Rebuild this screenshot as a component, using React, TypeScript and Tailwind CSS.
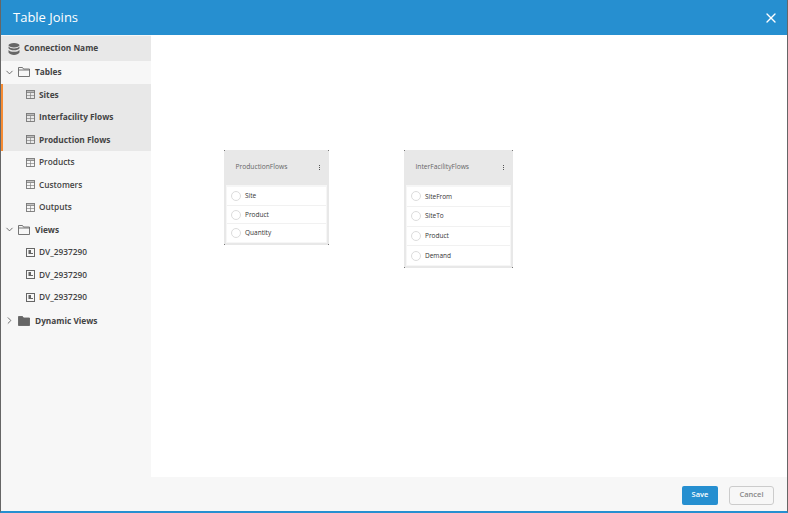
import { ChevronDown, ChevronRight, X } from "lucide-react";

function DbIcon() {
  return (
    <svg width="12" height="12" viewBox="0 0 12 12" className="shrink-0 text-[#666]" fill="currentColor">
      <ellipse cx="6" cy="2.200" rx="5.500" ry="2.200" />
      <path d="M.5 3.600C1.500 5 3.500 5.400 6 5.400s4.500-.4 5.500-1.800v1.700C10.500 6.800 8.500 7.300 6 7.300S1.500 6.800.5 5.300z" />
      <path d="M.5 6.900C1.500 8.200 3.500 8.700 6 8.700s4.500-.5 5.500-1.800v2.700C10.500 11.200 8.500 12 6 12S1.500 11.200.5 9.600z" />
    </svg>
  );
}

function FolderIcon({ filled }: { filled?: boolean }) {
  return (
    <svg width="12" height="10" viewBox="0 0 12 10" className="shrink-0 text-[#666]">
      <path
        d="M.5.500h4l1 1.500h6v7.500H.5zM.5 3h11"
        fill={filled ? "currentColor" : "none"}
        stroke="currentColor"
        strokeWidth=".9"
      />
    </svg>
  );
}

function ViewIcon() {
  return (
    <svg width="9" height="9" viewBox="0 0 9 9" className="shrink-0 text-[#666]">
      <rect x=".5" y=".5" width="8" height="8" fill="none" stroke="currentColor" />
      <path d="M2.500 2H5v3h2v1H2.500z" fill="currentColor" />
    </svg>
  );
}

function TableIcon() {
  return (
    <svg width="9" height="9" viewBox="0 0 9 9" className="shrink-0 text-[#777]">
      <rect x=".5" y=".5" width="8" height="8" fill="none" stroke="currentColor" strokeWidth=".9" />
      <path d="M0 2.200h9" fill="none" stroke="currentColor" strokeWidth="1.200" />
      <path d="M0 5.500h9M4.500 3v6" fill="none" stroke="currentColor" strokeWidth=".6" />
    </svg>
  );
}

function ChildRow({ label, icon, bold }: { label: string; icon: React.ReactNode; bold?: boolean }) {
  return (
    <div className={`flex h-[22.5px] items-center gap-[4px] pl-[25px] text-[8.3px] text-[#444] ${bold ? "font-bold" : "font-semibold"}`}>
      {icon}
      <span>{label}</span>
    </div>
  );
}

function GroupRow({ label, open, filled }: { label: string; open?: boolean; filled?: boolean }) {
  return (
    <div className="flex h-[22.5px] items-center pl-[3px] text-[8.3px] font-bold text-[#444]">
      {open ? (
        <ChevronDown size={11} strokeWidth={1.8} className="text-[#555]" />
      ) : (
        <ChevronRight size={11} strokeWidth={1.8} className="text-[#555]" />
      )}
      <span className="ml-[3px]">
        <FolderIcon filled={filled} />
      </span>
      <span className="ml-[5px]">{label}</span>
    </div>
  );
}

function FieldRow({ label }: { label: string }) {
  return (
    <div className="flex flex-1 items-center gap-[4px] border-b border-[#f1f1f1] pl-[4px] last:border-b-0">
      <span className="size-[10px] rounded-full border border-[#dcdcdc] bg-white" />
      <span className="text-[6.500px] font-medium text-[#333]">{label}</span>
    </div>
  );
}

function TableCard({ title, fields, className }: { title: string; fields: string[]; className: string }) {
  return (
    <div className={`absolute flex flex-col bg-[#e8e8e8] ${className}`}>
      <div className="flex h-[35px] shrink-0 items-center justify-between pl-[11.500px] pr-[9px]">
        <span className="text-[6.700px] text-[#666]">{title}</span>
        <span className="flex flex-col gap-px">
          <span className="size-px bg-[#555]" />
          <span className="size-px bg-[#555]" />
          <span className="size-px bg-[#555]" />
        </span>
      </div>
      <div className="mx-[2px] mb-[2px] flex flex-1 flex-col bg-[#f6f6f6] px-[1px] pb-[1px] pt-[2px]">
        <div className="flex flex-1 flex-col bg-white">
          {fields.map((f) => (
            <FieldRow key={f} label={f} />
          ))}
        </div>
      </div>
      <span className="absolute left-0 top-0 size-px bg-[#777]" />
      <span className="absolute right-0 top-0 size-px bg-[#777]" />
      <span className="absolute bottom-0 left-0 size-px bg-[#777]" />
      <span className="absolute bottom-0 right-0 size-px bg-[#777]" />
    </div>
  );
}

export default function App() {
  return (
    <div className="flex h-[513px] w-[788px] flex-col overflow-hidden border-x border-b-2 border-x-[#666] border-b-[#268fd0] bg-white font-['Open_Sans',sans-serif]">
      <header className="flex h-[35px] shrink-0 items-center justify-between bg-[#268fd0] pl-[12px] pr-[8px] text-white">
        <span className="text-[13px]">Table Joins</span>
        <X size={16} strokeWidth={2} />
      </header>
      <div className="flex min-h-0 flex-1">
        <aside className="w-[150px] shrink-0 bg-[#f7f7f7]">
          <div className="mt-px flex h-[25px] items-center gap-[4px] bg-[#e8e8e8] pl-[7px] text-[8.300px] font-bold text-[#444]">
            <DbIcon />
            Connection Name
          </div>
          <GroupRow label="Tables" open />
          <div className="border-l-2 border-[#f58b33] bg-[#e8e8e8] [&>div]:pl-[23px]">
            <ChildRow label="Sites" icon={<TableIcon />} bold />
            <ChildRow label="Interfacility Flows" icon={<TableIcon />} bold />
            <ChildRow label="Production Flows" icon={<TableIcon />} bold />
          </div>
          <ChildRow label="Products" icon={<TableIcon />} />
          <ChildRow label="Customers" icon={<TableIcon />} />
          <ChildRow label="Outputs" icon={<TableIcon />} />
          <GroupRow label="Views" open />
          <ChildRow label="DV_2937290" icon={<ViewIcon />} />
          <ChildRow label="DV_2937290" icon={<ViewIcon />} />
          <ChildRow label="DV_2937290" icon={<ViewIcon />} />
          <div className="mt-[1px]">
            <GroupRow label="Dynamic Views" filled />
          </div>
        </aside>
        <div className="flex min-w-0 flex-1 flex-col">
          <main className="relative flex-1 bg-white">
            <TableCard title="ProductionFlows" fields={["Site", "Product", "Quantity"]} className="left-[73px] top-[115px] h-[95px] w-[105px]" />
            <TableCard title="InterFacilityFlows" fields={["SiteFrom", "SiteTo", "Product", "Demand"]} className="left-[253px] top-[115px] h-[118px] w-[109px]" />
          </main>
          <footer className="flex h-[34px] shrink-0 items-center justify-end gap-[11px] bg-[#f7f7f7] pr-[13px] pt-[2px] text-[7.500px] font-semibold">
            <button className="h-[19px] w-[36px] rounded-[2px] bg-[#268fd0] text-white">Save</button>
            <button className="h-[19px] w-[45px] rounded-[3px] border border-[#ccc] bg-[#f7f7f7] text-[#888]">Cancel</button>
          </footer>
        </div>
      </div>
    </div>
  );
}
